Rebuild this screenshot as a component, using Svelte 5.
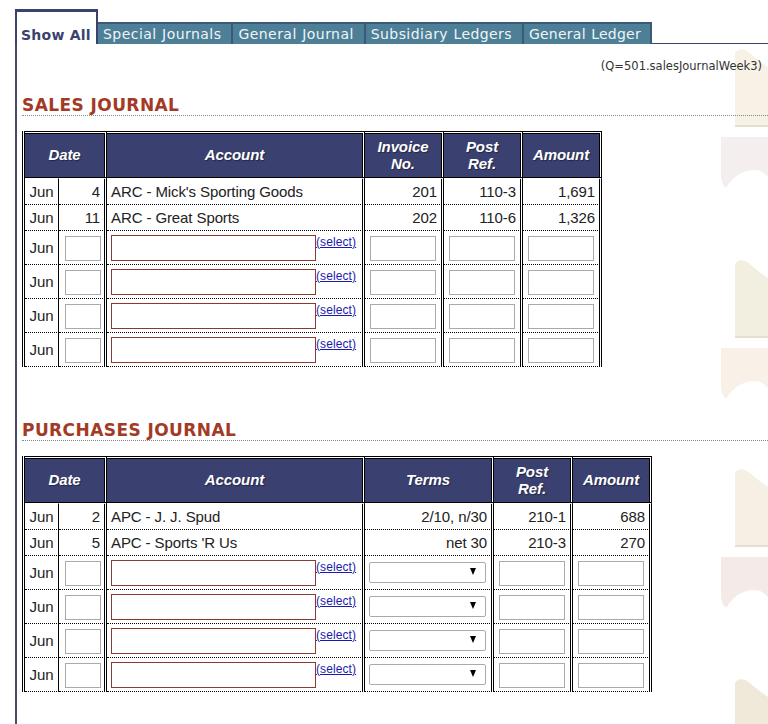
<script>
  const tabs = ['Special Journals', 'General Journal', 'Subsidiary Ledgers', 'General Ledger'];
  const decor = [
    { y: 47, a: '#f8f2e6', b: '#f5eeee' },
    { y: 258, a: '#f2eee0', b: '#f9f0e7' },
    { y: 467, a: '#f6efe3', b: '#f4ebe9' },
    { y: 677, a: '#efe9d9', b: '#f4ebe9' }
  ];
  const blanks = [0, 1, 2, 3];
</script>

<div class="decor" aria-hidden="true">
  {#each decor as d}
    <svg class="shape" width="47" height="142" viewBox="0 0 47 142" style="top:{d.y}px">
      <path d="M14 80V6C18 0 24 2 30 7C36 12 42 17 47 20V80Z" fill={d.a} />
      <path d="M14 78H47V80H14Z" fill="#e6dfcf" />
      <path d="M0 90H47V130C40 122 34 122 26 124C18 126 10 132 6 140C3 141 1 136 0 130Z" fill={d.b} />
    </svg>
  {/each}
</div>

<div class="page">
  <nav class="tabs">
    <a class="tab active" href="#all">Show All</a>
    {#each tabs as t}
      <a class="tab" href="#tab">{t}</a>
    {/each}
  </nav>

  <main class="content">
    <p class="qid">(Q=501.salesJournalWeek3)</p>

    <h2 class="first">SALES JOURNAL</h2>
    <table class="sales">
      <colgroup>
        <col class="c-jun" /><col class="c-num" /><col class="c-acct" /><col class="c-a" /><col class="c-b" /><col class="c-b" />
      </colgroup>
      <thead>
        <tr>
          <th colspan="2">Date</th><th>Account</th><th>Invoice<br />No.</th><th>Post<br />Ref.</th><th>Amount</th>
        </tr>
      </thead>
      <tbody>
        <tr class="data">
          <td class="mon">Jun</td><td class="r dbl">4</td><td class="dbl">ARC - Mick's Sporting Goods</td><td class="r dbl">201</td><td class="r dbl">110-3</td><td class="r dbl">1,691</td>
        </tr>
        <tr class="data">
          <td class="mon">Jun</td><td class="r dbl">11</td><td class="dbl">ARC - Great Sports</td><td class="r dbl">202</td><td class="r dbl">110-6</td><td class="r dbl">1,326</td>
        </tr>
        {#each blanks as _}
          <tr class="entry">
            <td class="mon">Jun</td>
            <td class="dbl ctr"><input class="day" /></td>
            <td class="dbl"><div class="acct"><input class="name" /><a href="#select">(select)</a></div></td>
            <td class="dbl ctr"><input class="cell" /></td>
            <td class="dbl ctr"><input class="cell" /></td>
            <td class="dbl ctr"><input class="cell" /></td>
          </tr>
        {/each}
      </tbody>
    </table>

    <h2 class="second">PURCHASES JOURNAL</h2>
    <table class="purchases">
      <colgroup>
        <col class="c-jun" /><col class="c-num" /><col class="c-acct" /><col class="c-t" /><col class="c-b" /><col class="c-b" />
      </colgroup>
      <thead>
        <tr>
          <th colspan="2">Date</th><th>Account</th><th>Terms</th><th>Post<br />Ref.</th><th>Amount</th>
        </tr>
      </thead>
      <tbody>
        <tr class="data">
          <td class="mon">Jun</td><td class="r dbl">2</td><td class="dbl">APC - J. J. Spud</td><td class="r dbl">2/10, n/30</td><td class="r dbl">210-1</td><td class="r dbl">688</td>
        </tr>
        <tr class="data">
          <td class="mon">Jun</td><td class="r dbl">5</td><td class="dbl">APC - Sports 'R Us</td><td class="r dbl">net 30</td><td class="r dbl">210-3</td><td class="r dbl">270</td>
        </tr>
        {#each blanks as _}
          <tr class="entry">
            <td class="mon">Jun</td>
            <td class="dbl ctr"><input class="day" /></td>
            <td class="dbl"><div class="acct"><input class="name" /><a href="#select">(select)</a></div></td>
            <td class="dbl"><span class="sel"><select></select></span></td>
            <td class="dbl ctr"><input class="cell" /></td>
            <td class="dbl ctr"><input class="cell" /></td>
          </tr>
        {/each}
      </tbody>
    </table>
  </main>
</div>

<style>
  :global(body) {
    margin: 0;
    background: #fff;
  }
  .decor {
    position: absolute;
    top: 0;
    right: 0;
    width: 47px;
    height: 724px;
    overflow: hidden;
  }
  .shape {
    position: absolute;
    right: 0;
    filter: blur(0.6px);
  }
  .page {
    position: relative;
    height: 724px;
    overflow: hidden;
    padding: 9px 0 0 15px;
    box-sizing: border-box;
    font-family: "Liberation Sans", Arial, sans-serif;
    color: #222;
  }
  .tabs {
    display: flex;
    align-items: flex-end;
    height: 34px;
    border-bottom: 1px solid #3a4668;
  }
  .tab {
    display: block;
    box-sizing: border-box;
    height: 22px;
    margin-bottom: -1px;
    padding: 2px 10px 0 5px;
    background: #4d7f96;
    border-top: 2px solid #3b5a78;
    border-right: 2px solid #3b5a78;
    color: #eef5f8;
    font: 14px/17px "DejaVu Sans", Verdana, sans-serif;
    letter-spacing: 0.45px;
    word-spacing: 0.6px;
    text-decoration: none;
    white-space: nowrap;
  }
  .tab:nth-child(4) {
    letter-spacing: 0.4px;
  }
  .tab:nth-child(5) {
    letter-spacing: 0.25px;
    padding-right: 9px;
  }
  .tab.active {
    height: 35px;
    width: 83px;
    padding: 15px 0 0 4px;
    background: #fff;
    border-top: 3px solid #3b4270;
    border-left: 2px solid #3b4270;
    border-right: 2px solid #3b4270;
    color: #3b4270;
    font-weight: bold;
    font-size: 14px;
    letter-spacing: 0.25px;
    word-spacing: 0;
  }
  .content {
    height: 680px;
    border-left: 2px solid #4a4a68;
    padding-left: 5px;
  }
  .qid {
    margin: 0;
    padding: 15px 6px 0 0;
    height: 14px;
    text-align: right;
    font: 11.5px/14px "DejaVu Sans", Verdana, sans-serif;
    color: #333;
  }
  h2 {
    margin: 0;
    color: #a33a25;
    font: bold 17px/20px "DejaVu Sans", Verdana, sans-serif;
    letter-spacing: 0.42px;
    border-bottom: 1px dotted #888;
    height: 20px;
  }
  h2.first {
    margin-top: 22px;
  }
  h2.second {
    margin-top: 53px;
  }
  table {
    border-collapse: separate;
    border-spacing: 0;
    table-layout: fixed;
    margin-top: 15px;
    border-left: 3px double #000;
    font-size: 15px;
    letter-spacing: -0.1px;
    color: #222;
  }
  .sales { width: 580px; }
  .purchases { width: 630px; }
  .c-jun { width: 34px; }
  .c-num { width: 48px; }
  .c-acct { width: 258px; }
  .c-a { width: 79px; }
  .c-t { width: 129px; }
  .c-b { width: 79px; }
  th {
    height: 41px;
    padding: 0 0 2px;
    background: #3a4170;
    background-clip: padding-box;
    color: #fff;
    font: italic bold 15px/17px "Liberation Sans", Arial, sans-serif;
    text-align: center;
    border-top: 3px double #000;
    border-right: 3px double #000;
    border-bottom: 1px solid #000;
    text-shadow: 1px 1px 1px #22264a;
  }
  td {
    padding: 0;
    border-bottom: 1px dotted #000;
    vertical-align: middle;
    white-space: nowrap;
    overflow: hidden;
  }
  tbody tr:first-child td {
    border-top: 1px solid #fff;
  }
  .data td {
    height: 24px;
    padding-top: 1px;
    line-height: 24px;
  }
  .entry td {
    height: 33px;
  }
  .mon {
    border-right: 1px solid #000;
    text-align: center;
  }
  .dbl {
    border-right: 3px double #000;
    padding-left: 4px;
    padding-right: 4px;
  }
  .r {
    text-align: right;
  }
  .ctr {
    text-align: center;
  }
  input, select {
    box-sizing: border-box;
    display: block;
    margin: 0;
    padding: 0;
    background: #fff;
    border: 1px solid #aaa;
    outline: none;
  }
  .day {
    width: 36px;
    height: 25px;
    margin: 1px 0 0 2px;
  }
  .cell {
    width: 66px;
    height: 25px;
    margin: 1px auto 0;
  }
  .acct {
    display: flex;
    align-items: flex-start;
  }
  .name {
    width: 205px;
    height: 26px;
    border-color: #8b3a32;
  }
  .acct a {
    color: #1a1ab0;
    font-size: 12px;
    letter-spacing: 0.1px;
    line-height: 14px;
  }
  .sel {
    position: relative;
    display: block;
    width: 117px;
  }
  select {
    appearance: none;
    width: 117px;
    height: 21px;
    border-radius: 2px;
  }
  .sel::after {
    content: "";
    position: absolute;
    right: 10px;
    top: 6px;
    border-left: 3.5px solid transparent;
    border-right: 3.5px solid transparent;
    border-top: 7px solid #000;
  }
</style>
